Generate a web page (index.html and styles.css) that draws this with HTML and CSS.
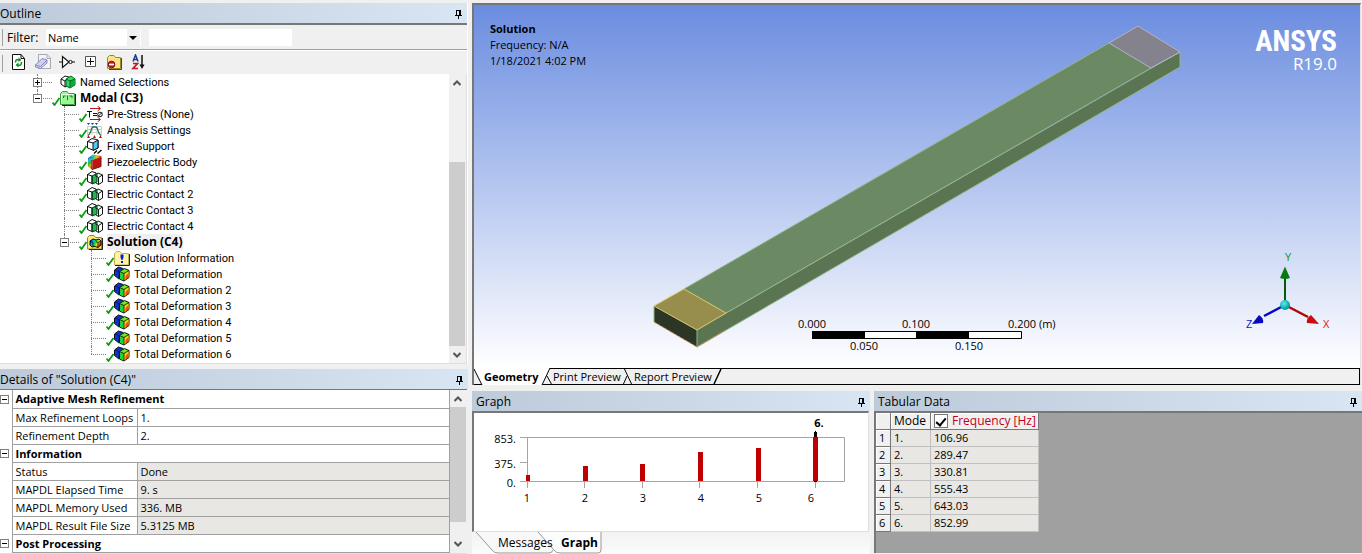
FILE: index.html
```html
<!DOCTYPE html>
<html lang="en">
<head>
<meta charset="utf-8">
<title>Modal Analysis</title>
<link rel="stylesheet" href="styles.css">
</head>
<body>
<svg class="defs" aria-hidden="true">
  <defs>
    <linearGradient id="rainbow" x1="0" y1="0" x2="1" y2="0.4">
      <stop offset="0.1" stop-color="#0a20d8"/><stop offset="0.35" stop-color="#00b4e8"/><stop offset="0.55" stop-color="#18d428"/><stop offset="0.8" stop-color="#f0e010"/><stop offset="1" stop-color="#e02008"/>
    </linearGradient>
    <linearGradient id="piezo" x1="0" y1="0" x2="0.3" y2="1">
      <stop offset="0" stop-color="#1238e0"/><stop offset="0.25" stop-color="#18c8d0"/><stop offset="0.5" stop-color="#30b830"/><stop offset="0.8" stop-color="#d8b010"/><stop offset="1" stop-color="#e06010"/>
    </linearGradient>
    <linearGradient id="piezo-top" x1="0" y1="0" x2="1" y2="0">
      <stop offset="0" stop-color="#1850e0"/><stop offset="0.35" stop-color="#20c0a0"/><stop offset="0.65" stop-color="#d8c820"/><stop offset="1" stop-color="#d83010"/>
    </linearGradient>
  </defs>
  <symbol id="pin" viewBox="0 0 7 9"><path d="M1 0h5v5h1v1H4v3H3V6H0V5h1zM2 1v4h2V1z" fill="#000" fill-rule="evenodd" shape-rendering="crispEdges"/></symbol>
  <symbol id="up" viewBox="0 0 8 6"><path d="M.5 5L4 1.5 7.500 5" fill="none" stroke="#555" stroke-width="2"/></symbol>
  <symbol id="down" viewBox="0 0 8 6"><path d="M.5 1L4 4.500 7.500 1" fill="none" stroke="#555" stroke-width="2"/></symbol>
  <symbol id="check" viewBox="0 0 8 9"><path d="M.5 5.500L2.500 8 7.500 1" fill="none" stroke="#0a9a14" stroke-width="1.800"/></symbol>
  <symbol id="named" viewBox="0 0 16 16"><path d="M1 5l4-3 4 1v8l-4 2-4-3z" fill="#fff" stroke="#111"/><path d="M1 5l4 2v6M5 7l4-3" fill="none" stroke="#111"/><path d="M6 5l5-3 4 3v6l-5 3-4-2z" fill="#35dc50" stroke="#063"/><path d="M10 7l5-2v6l-5 3z" fill="#12a838"/><path d="M6 5l4 2v7M10 7l5-2" fill="none" stroke="#063"/></symbol>
  <symbol id="modal" viewBox="0 0 16 16"><path d="M.5 14.500V3.500L2.500 1.500H7L8.500 3.500H14.500V14.500z" fill="#9af596" stroke="#3c9a3c"/><path d="M1.500 13V4.500h12" fill="none" stroke="#dcffd8"/><path d="M3.500 8V6h2M7.500 10V5.500M9.500 6h2.500v2" fill="none" stroke="#2a702a"/><path d="M15.500 4v11.500H2" fill="none" stroke="#222"/></symbol>
  <symbol id="stress" viewBox="0 0 16 16"><path d="M3 2.500h10M3 13.500h10M10.500 0L13.500 2.500 10.500 5M10.500 11L13.500 13.500 10.500 16" fill="none" stroke="#b01818"/><path d="M0 5.500h5M2.500 5.500v6M6 7.500h4M6 9.500h4M11 10.500l4-4" fill="none" stroke="#111"/><circle cx="13" cy="8.500" r="2.300" fill="none" stroke="#111"/></symbol>
  <symbol id="settings" viewBox="0 0 16 16"><path d="M.5 14V4.500h14V14M.5 7.500h14M.5 10.500h14M5 4v9M10 4v9" fill="none" stroke="#ccc"/><path d="M1 13c3 0 3-8 5-8h3c2 0 2 8 5 8" fill="none" stroke="#187040" stroke-width="1.300"/><path d="M0 1h3L1.500 3zM4 1h3L5.500 3zM8 1h3L9.500 3z" fill="#1030c8"/><path d="M0 16l1.500-3L3 16zM6 16l1.500-3L9 16zM12 16l1.500-3L15 16z" fill="#c01010"/></symbol>
  <symbol id="support" viewBox="0 0 16 16"><path d="M.5 3.500L5 .5l6 1.500v8L6 12 .5 10z" fill="#fff" stroke="#111"/><path d="M6 5l5-3v8l-5 2.500z" fill="#50c8f8" stroke="#111"/><path d="M.5 3.500L6 5" stroke="#111"/><path d="M7 15.500l3-3M10.500 15.500l4-3.500" stroke="#111" stroke-width="1.500"/></symbol>
  <symbol id="body" viewBox="0 0 16 16"><path d="M1 4l4 2v9.500L1 12.500z" fill="url(#piezo)"/><path d="M1 4l5-3.500 8.500 1.500V5L5 6z" fill="url(#piezo-top)"/><path d="M5.500 6l8.500-3v9.500l-8.500 3z" fill="#c01414"/><path d="M5 6v9.500l9-3V4" fill="none" stroke="#7c1408"/></symbol>
  <symbol id="contact" viewBox="0 0 16 16"><g fill="#fff" stroke="#111"><path d="M.5 4.500L5 1.500l4 1.500v8L5 13.500l-4.500-2z"/><path d="M7.500 5.500l3.500-2.500 4.500 2v7l-4 2.500-4-2.500z"/></g><path d="M5 6l5-2.500v8.500l-5 2z" fill="#20b850" stroke="#053818"/><path d="M.5 4.500L5 6v7M11.500 7.500l4-2.500M11.500 7.500v7M8 5.500l3.500 2" fill="none" stroke="#111"/></symbol>
  <symbol id="solution" viewBox="0 0 16 16"><path d="M.5 15V3.500L2.500 1.500H7L8.500 3.500H14.500V15z" fill="#f8e878" stroke="#a08818"/><path d="M3 7l3-2 3 1 3-1 2 2v4l-3 2.500-3-1-3 .5-2-2z" fill="url(#rainbow)" stroke="#111"/><path d="M3 7l3 1.500V13M9 7.500l2 1v5M11 8.500l3-1.500" fill="none" stroke="#111" stroke-width=".8"/><path d="M15.500 4v11.500H2" fill="none" stroke="#222"/></symbol>
  <symbol id="info" viewBox="0 0 16 16"><path d="M.5 15V3.500L2.500 1.500H6L7.500 3.500H14.500V15z" fill="#fdf3a8" stroke="#c8b050"/><path d="M15.500 4v11.500H1" fill="none" stroke="#222"/><path d="M6.500 4.500h3v3l-1 2.500h-1l-1-2.500zM7 11h2v2H7z" fill="#1018e8"/></symbol>
  <symbol id="deform" viewBox="0 0 16 16"><path d="M.5 4l4-3L9 2.500v7L5 13 .5 9.500z" fill="#1030d8" stroke="#111"/><path d="M5 5.500L8.500 3v8L5 12.500z" fill="#10a8f0"/><path d="M1 4l4 1.500V12" fill="none" stroke="#0a1870"/><path d="M5.500 5.500l5-3 4.500 2v7l-5 3.500-4.500-2z" fill="#70e820" stroke="#111"/><path d="M6 6l4 1.500V14.500L6 12.500z" fill="#18d838"/><path d="M10 7.500l4.500-2.500v6L10 14.500z" fill="#f8d010"/><path d="M12 9.500l2.500-2.500v4.500L11 13.800z" fill="#f84810"/><path d="M5.500 5.500l4.500 2 5-3M10 7.500v7.500" fill="none" stroke="#111" stroke-width=".8"/></symbol>
</svg>

<main class="workspace">
  <div class="side">
    <section class="panel outline">
      <header class="titlebar"><h2>Outline</h2><button class="pin" aria-label="Auto hide outline"><svg><use href="#pin"/></svg></button></header>
      <form class="filter">
        <label for="filter-by">Filter:</label>
        <span class="combo"><select id="filter-by"><option>Name</option></select></span>
        <input type="text" class="filter-text" aria-label="Filter text">
      </form>
      <div class="toolbar">
        <button aria-label="Refresh"><svg viewBox="0 0 16 16"><path d="M1.500.5H10l3.500 4V15.500H1.500z" fill="#fff" stroke="#111"/><path d="M10 .5v4h3.500" fill="none" stroke="#111"/><path d="M4.500 8.500C4.500 6 6 5 8 6M10.500 8c0 3-1.500 4-3.500 3" fill="none" stroke="#10902a" stroke-width="1.600"/><path d="M7.500 3.500l3 2.500-3 2zM7.500 8.500L4.500 11l3 2.500z" fill="#10902a"/></svg></button>
        <button aria-label="Clear data"><svg viewBox="0 0 16 16"><path d="M3.500.5H12l3.500 3.500V14.500H3.500z" fill="#f4f4f8" stroke="#a8a8b4"/><path d="M12 .5v4h3.500" fill="none" stroke="#a8a8b4"/><path d="M.5 11L7 4.500l5 1.500v3L5.500 14.500.5 13z" fill="#d0d0f0" stroke="#8888b8"/><path d="M.5 11l5 1.500L12 6" fill="none" stroke="#8888b8"/></svg></button>
        <button aria-label="Graphics"><svg viewBox="0 0 16 16"><path d="M0 8h3M3.500 2.500v11L10 8zM13 8h3" fill="#fff" stroke="#111" stroke-width="1.200"/><circle cx="11.500" cy="8" r="1.600" fill="#fff" stroke="#111"/></svg></button>
        <button aria-label="Expand all"><svg viewBox="0 0 16 16"><path d="M2.500 2.500h10v10h-10z" fill="#fff" stroke="#555"/><path d="M4 7.500h7M7.500 4v7" stroke="#111"/></svg></button>
        <button aria-label="Hide folders"><svg viewBox="0 0 16 16"><path d="M.5 14.500V3.500L2.500 1.500H7L8.500 3.500H13.500V14.500z" fill="#f8e488" stroke="#a08820"/><path d="M14.500 4v11.500H2" fill="none" stroke="#444"/><circle cx="4.500" cy="10.500" r="3.300" fill="#d81830" stroke="#700818"/><path d="M2 10.500h5" stroke="#fff" stroke-width="1.600"/></svg></button>
        <button aria-label="Sort ascending"><svg viewBox="0 0 16 16"><path d="M2 7.500L4.500 1 7 7.500M3 5.500h3" fill="none" stroke="#203890" stroke-width="1.500"/><path d="M2 9.500h4.500L2 14.500h5" fill="none" stroke="#c01828" stroke-width="1.700"/><path d="M11 1v11" stroke="#111" stroke-width="1.500"/><path d="M8.500 10.500h5L11 15z" fill="#111"/></svg></button>
      </div>
      <div class="scroller">
        <ul class="tree">
          <li><div class="row"><i></i><button class="exp plus" aria-label="Expand"></button><span class="check"></span><svg class="icon"><use href="#named"/></svg><span class="label">Named Selections</span></div></li>
          <li><div class="row"><i></i><button class="exp" aria-label="Collapse"></button><svg class="check"><use href="#check"/></svg><svg class="icon"><use href="#modal"/></svg><b class="label">Modal (C3)</b></div>
            <ul>
              <li><div class="row"><i></i><svg class="check"><use href="#check"/></svg><svg class="icon"><use href="#stress"/></svg><span class="label">Pre-Stress (None)</span></div></li>
              <li><div class="row"><i></i><svg class="check"><use href="#check"/></svg><svg class="icon"><use href="#settings"/></svg><span class="label">Analysis Settings</span></div></li>
              <li><div class="row"><i></i><svg class="check"><use href="#check"/></svg><svg class="icon"><use href="#support"/></svg><span class="label">Fixed Support</span></div></li>
              <li><div class="row"><i></i><svg class="check"><use href="#check"/></svg><svg class="icon"><use href="#body"/></svg><span class="label">Piezoelectric Body</span></div></li>
              <li><div class="row"><i></i><svg class="check"><use href="#check"/></svg><svg class="icon"><use href="#contact"/></svg><span class="label">Electric Contact</span></div></li>
              <li><div class="row"><i></i><svg class="check"><use href="#check"/></svg><svg class="icon"><use href="#contact"/></svg><span class="label">Electric Contact 2</span></div></li>
              <li><div class="row"><i></i><svg class="check"><use href="#check"/></svg><svg class="icon"><use href="#contact"/></svg><span class="label">Electric Contact 3</span></div></li>
              <li><div class="row"><i></i><svg class="check"><use href="#check"/></svg><svg class="icon"><use href="#contact"/></svg><span class="label">Electric Contact 4</span></div></li>
              <li><div class="row"><i></i><button class="exp" aria-label="Collapse"></button><svg class="check"><use href="#check"/></svg><svg class="icon"><use href="#solution"/></svg><b class="label selected">Solution (C4)</b></div>
                <ul>
                  <li><div class="row"><i></i><svg class="check"><use href="#check"/></svg><svg class="icon"><use href="#info"/></svg><span class="label">Solution Information</span></div></li>
                  <li><div class="row"><i></i><svg class="check"><use href="#check"/></svg><svg class="icon"><use href="#deform"/></svg><span class="label">Total Deformation</span></div></li>
                  <li><div class="row"><i></i><svg class="check"><use href="#check"/></svg><svg class="icon"><use href="#deform"/></svg><span class="label">Total Deformation 2</span></div></li>
                  <li><div class="row"><i></i><svg class="check"><use href="#check"/></svg><svg class="icon"><use href="#deform"/></svg><span class="label">Total Deformation 3</span></div></li>
                  <li><div class="row"><i></i><svg class="check"><use href="#check"/></svg><svg class="icon"><use href="#deform"/></svg><span class="label">Total Deformation 4</span></div></li>
                  <li><div class="row"><i></i><svg class="check"><use href="#check"/></svg><svg class="icon"><use href="#deform"/></svg><span class="label">Total Deformation 5</span></div></li>
                  <li><div class="row"><i></i><svg class="check"><use href="#check"/></svg><svg class="icon"><use href="#deform"/></svg><span class="label">Total Deformation 6</span></div></li>
                </ul>
              </li>
            </ul>
          </li>
        </ul>
        <div class="scrollbar tree-bar"><button aria-label="Scroll up"><svg><use href="#up"/></svg></button><span class="before"></span><span class="thumb"></span><span class="after"></span><button aria-label="Scroll down"><svg><use href="#down"/></svg></button></div>
      </div>
    </section>

    <section class="panel details">
      <header class="titlebar"><h2>Details of "Solution (C4)"</h2><button class="pin" aria-label="Auto hide details"><svg><use href="#pin"/></svg></button></header>
      <div class="scroller">
        <table class="props">
          <tbody>
            <tr><td class="gutter"><button class="exp" aria-label="Collapse"></button></td><th colspan="2">Adaptive Mesh Refinement</th></tr>
            <tr><td class="gutter"></td><td class="key">Max Refinement Loops</td><td>1.</td></tr>
            <tr><td class="gutter"></td><td class="key">Refinement Depth</td><td>2.</td></tr>
            <tr><td class="gutter"><button class="exp" aria-label="Collapse"></button></td><th colspan="2">Information</th></tr>
            <tr><td class="gutter"></td><td class="key">Status</td><td class="fixed">Done</td></tr>
            <tr><td class="gutter"></td><td class="key">MAPDL Elapsed Time</td><td class="fixed">9. s</td></tr>
            <tr><td class="gutter"></td><td class="key">MAPDL Memory Used</td><td class="fixed">336. MB</td></tr>
            <tr><td class="gutter"></td><td class="key">MAPDL Result File Size</td><td class="fixed">5.3125 MB</td></tr>
            <tr><td class="gutter"><button class="exp" aria-label="Collapse"></button></td><th colspan="2">Post Processing</th></tr>
          </tbody>
        </table>
        <div class="scrollbar props-bar"><button aria-label="Scroll up"><svg><use href="#up"/></svg></button><span class="before"></span><span class="thumb"></span><span class="after"></span><button aria-label="Scroll down"><svg><use href="#down"/></svg></button></div>
      </div>
    </section>
  </div>

  <div class="stage">
    <section class="view">
      <div class="scene">
        <svg class="model" viewBox="0 0 886 363" role="img" aria-label="Beam with two end patches">
          <path d="M210 284L635 38 677 63 252 308z" fill="#6b8a63"/>
          <path d="M223 325L706 47V62L223 342z" fill="#5b7553"/>
          <path d="M180 301L223 325V342L180 317z" fill="#2b3626"/>
          <path d="M180 301L210 284 252 308 223 325z" fill="#978d4c"/>
          <path d="M635 38L664 21 706 47 677 63z" fill="#83828d"/>
          <path d="M210 284L635 38M252 308L677 63M677 63L706 47V62L223 342V325M180 301V317" fill="none" stroke="#8fb588"/>
          <path d="M180 301L210 284 252 308 223 325z" fill="none" stroke="#d6c566"/>
          <path d="M635 38L664 21 706 47 677 63z" fill="none" stroke="#b4b2c4"/>
          <path d="M180 317L223 342 252 325" fill="none" stroke="#cf945e" stroke-dasharray="3 1"/>
        </svg>
        <div class="note"><b>Solution</b><span>Frequency: N/A</span><span>1/18/2021 4:02 PM</span></div>
        <div class="brand"><b>ANSYS</b><span>R19.0</span></div>
        <svg class="scale" viewBox="0 0 280 36">
          <path d="M35.500 15.500h209v7h-209z" fill="#fff" stroke="#000"/><path d="M35 15h53v8H35zM139 15h53v8h-53z"/>
          <g text-anchor="middle"><text x="35" y="12">0.000</text><text x="139" y="12">0.100</text><text x="87" y="34">0.050</text><text x="192" y="34">0.150</text></g><text x="231" y="12">0.200 (m)</text>
        </svg>
        <svg class="triad" viewBox="0 0 90 85">
          <defs><radialGradient id="ball" cx=".4" cy=".35" r=".6"><stop offset="0" stop-color="#50f0f0"/><stop offset="1" stop-color="#089898"/></radialGradient></defs>
          <path d="M41 57V28" stroke="#065a0a" stroke-width="2"/><path d="M41 57L20 68" stroke="#0808c8" stroke-width="2.500"/><path d="M41 57L64 69" stroke="#b00808" stroke-width="2.500"/>
          <path d="M41 18.500L46 30Q41 32 36 30z" fill="#087810"/><path d="M8 76L15 67Q20 70 19 75z" fill="#0808c0"/><path d="M75 76L67 67Q62 70 63 75z" fill="#cc0c0c"/>
          <circle cx="41" cy="57" r="5" fill="url(#ball)"/>
          <text x="41" y="13" fill="#109818">Y</text><text x="79" y="80" fill="#e01818">X</text><text x="2" y="80" fill="#1818d0">Z</text>
        </svg>
      </div>
      <nav class="view-tabs">
        <svg viewBox="0 0 250 17" aria-hidden="true"><path d="M0 0H76L68 17H8z" fill="#fff"/><path d="M76 .5H250M0 1L8 17M76 0L68 17M73 8l5 9M149 17l4-9M150 0l8 17" fill="none" stroke="#000"/><path d="M247 1L240 16" stroke="#000" stroke-width="1.500"/></svg>
        <button class="current">Geometry</button><button>Print Preview</button><button>Report Preview</button>
      </nav>
    </section>

    <div class="data">
      <section class="panel graph">
        <header class="titlebar"><h2>Graph</h2><button class="pin" aria-label="Auto hide graph"><svg><use href="#pin"/></svg></button></header>
        <div class="chart">
          <svg viewBox="0 0 394 118" role="img" aria-label="Frequency by mode">
            <path d="M46 24.500H370.500V68.500H46M53.500 24V75M46 49.500h7M110.500 68v7M168.500 68v7M225.500 68v7M283.500 68v7M341.500 68v7" fill="none" stroke="#a5a5a5"/>
            <path d="M52 62h4v6h-4zM109 53h5v15h-5zM166 51h5v17h-5zM224 39h5v29h-5zM282 35h5v33h-5zM339 24h5v44h-5z" fill="#c00000"/>
            <path d="M340 24v-5h1v-1h1v1h1v5zM340 68h3v1h-3z"/>
            <g text-anchor="end"><text x="42" y="30">853.</text><text x="42" y="55">375.</text><text x="42" y="74">0.</text></g>
            <g text-anchor="middle"><text x="53" y="89">1</text><text x="111" y="89">2</text><text x="169" y="89">3</text><text x="227" y="89">4</text><text x="285" y="89">5</text><text x="337" y="89">6</text><text x="345" y="14" font-weight="bold">6.</text></g>
          </svg>
        </div>
        <nav class="graph-tabs">
          <svg viewBox="0 0 130 22" aria-hidden="true"><path d="M4 0L20 18Q22 21 26 21H77Q80 21 81 18L67 0z" fill="#f8f8f8"/><path d="M4 0L20 18Q22 21 26 21H77Q80 21 81 18" fill="none" stroke="#999"/><path d="M66 0L82 18Q84 21 88 21H126Q129 21 129 18V0" fill="#fcfcfc" stroke="#999"/></svg>
          <button>Messages</button><button class="current">Graph</button>
        </nav>
      </section>
      <section class="panel tabular">
        <header class="titlebar"><h2>Tabular Data</h2><button class="pin" aria-label="Auto hide tabular data"><svg><use href="#pin"/></svg></button></header>
        <div class="sheet">
          <table>
            <thead><tr><th></th><th>Mode</th><th class="freq"><label><input type="checkbox" checked>Frequency [Hz]</label></th></tr></thead>
            <tbody>
              <tr><th>1</th><td>1.</td><td>106.96</td></tr>
              <tr><th>2</th><td>2.</td><td>289.47</td></tr>
              <tr><th>3</th><td>3.</td><td>330.81</td></tr>
              <tr><th>4</th><td>4.</td><td>555.43</td></tr>
              <tr><th>5</th><td>5.</td><td>643.03</td></tr>
              <tr><th>6</th><td>6.</td><td>852.99</td></tr>
            </tbody>
          </table>
        </div>
      </section>
    </div>
  </div>
</main>
</body>
</html>
```
FILE: styles.css
```css
* { box-sizing: border-box; }
body {
  margin: 0;
  background: #f0f0f0;
  color: #000;
  font: 12px/16px "Open Sans", "Noto Sans", sans-serif;
}
button { margin: 0; padding: 0; border: 0; background: none; color: inherit; font: inherit; }
svg { display: block; }
ul { list-style: none; margin: 0; padding: 0; }
.defs { position: absolute; width: 0; height: 0; }

.workspace {
  display: grid;
  grid-template-columns: 468px minmax(0, 1fr);
  column-gap: 4px;
  min-height: 100vh;
  padding-top: 3px;
}
.side { display: flex; flex-direction: column; gap: 5px; }
.stage { display: flex; flex-direction: column; gap: 6px; }

.titlebar {
  display: flex;
  align-items: center;
  justify-content: space-between;
  height: 20px;
  padding-top: 2px;
  padding-right: 5px;
  background: linear-gradient(90deg, #bccad9, #d8e5f3);
}
.titlebar h2 { margin: 0; font-size: 12px; font-weight: 400; }
.stage .titlebar { padding-left: 4px; }
.pin svg { width: 7px; height: 9px; }

/* Outline */
.outline { border-right: 1px solid #fff; }
.filter {
  display: flex;
  align-items: center;
  height: 27px;
  padding: 1px 0 0 7px;
  border: solid #777;
  border-width: 2px 0 1px;
  border-bottom-color: #a0a0a0;
}
.filter, .toolbar {
  background: linear-gradient(#a0a0a0, #a0a0a0) 2px 4px / 1px 17px no-repeat;
}
.filter label { width: 39px; }
.combo { position: relative; width: 95px; background: #fff; }
.combo::before, .combo::after { content: ""; position: absolute; pointer-events: none; }
.combo::before { top: 0; right: 1px; width: 13px; height: 17px; background: #f0f0f0; }
.combo::after {
  top: 7px;
  right: 4px;
  border: 4px solid transparent;
  border-top-color: #000;
  border-bottom: 0;
}
.combo select, .filter-text {
  display: block;
  width: 100%;
  height: 17px;
  padding: 0 2px;
  border: 0;
  border-radius: 0;
  background: #fff;
  font: 11px/16px "Open Sans", "Noto Sans", sans-serif;
  appearance: none;
}
.filter-text { width: 143px; margin-left: 8px; }
.toolbar {
  display: flex;
  align-items: center;
  gap: 8px;
  height: 24px;
  padding: 0 0 1px 11px;
  border-top: 1px solid #fff;
}
.toolbar svg { width: 16px; height: 16px; }
.scroller { display: flex; }
.outline .scroller { border-right: 1px solid #dfdfdf; border-bottom: 1px solid #dfdfdf; }

.tree {
  flex: 1;
  padding: 0 0 1px 37px;
  background: #fff;
  font-family: Roboto, "Open Sans", sans-serif;
  font-size: 11px;
}
.tree ul { margin-left: 27px; }
.tree li { position: relative; }
.tree li::before {
  content: "";
  position: absolute;
  top: 0;
  bottom: 0;
  left: 0;
  border-left: 1px dotted #808080;
}
.tree li:last-child::before { bottom: auto; height: 8px; }
.row { position: relative; display: flex; align-items: center; height: 16px; }
.row i { width: 15px; border-top: 1px dotted #808080; }
.check { width: 8px; height: 9px; margin-top: 7px; }
.icon { width: 16px; height: 16px; }
.label { margin-left: 4px; padding-top: 2px; line-height: 14px; white-space: nowrap; }
b.label { padding-top: 0; line-height: 16px; font-family: "Open Sans", "Noto Sans", sans-serif; font-size: 12px; }
.selected { background: #f0f0f0; }
.exp {
  width: 9px;
  height: 9px;
  border: 1px solid #808080;
  background: linear-gradient(#000, #000) center / 5px 1px no-repeat #fff;
}
.row .exp { position: absolute; left: -4px; top: 4px; }
.exp.plus {
  background:
    linear-gradient(#000, #000) center / 5px 1px no-repeat,
    linear-gradient(#000, #000) center / 1px 5px no-repeat #fff;
}

.scrollbar { display: flex; flex-direction: column; width: 17px; padding-right: 1px; background: #f0f0f0; }
.scrollbar button { display: grid; place-items: center; height: 17px; }
.scrollbar svg { width: 8px; height: 6px; }
.thumb { background: #cdcdcd; }
.tree-bar .before { flex: 71; }
.tree-bar .thumb { flex: 184; }
.props-bar .thumb { flex: 115; }
.props-bar .after { flex: 14; }

/* Details */
.details .scroller { border-top: 1px solid #777; border-bottom: 1px solid #dfdfdf; margin-right: 1px; }
.props { flex: 1; border-collapse: collapse; background: #fff; table-layout: fixed; }
.props tr { height: 18px; }
.props td, .props th {
  padding: 0 0 0 3px;
  border: 1px solid #a0a0a0;
  border-top: 0;
  font-size: 11px;
  line-height: 17px;
  text-align: left;
}
.props th { font-weight: 700; }
.props td.gutter { width: 12px; padding: 0; border-bottom: 0; border-left: 0; }
.gutter .exp { display: block; }
.props td.key { width: 125px; }
.props td.fixed { background: #e8e7e3; }

/* Graphics view */
.view {
  margin-right: 1px;
  border: solid #a0a0a0;
  border-width: 2px 1px 0 2px;
  border-color: #777 #e3e3e3 #777 #777;
  display: flex;
  flex: 1;
  flex-direction: column;
}
.scene { position: relative; flex: 1; background: linear-gradient(#6b8de0, #fff); }
.model { width: 100%; height: 100%; }
.note { position: absolute; top: 16px; left: 16px; display: flex; flex-direction: column; font-size: 11px; }
.brand { position: absolute; top: 20px; right: 23px; display: flex; flex-direction: column; align-items: flex-end; color: #fff; }
.brand b { font: 700 29px/32px "Roboto Condensed", "Open Sans", sans-serif; }
.brand span { font-size: 17px; line-height: 14px; }
.scale, .triad { position: absolute; font-size: 11px; }
.scale { left: 50%; bottom: 16px; width: 280px; height: 36px; margin-left: -140px; }
.triad { right: 26px; bottom: 35px; width: 90px; height: 85px; }

.view-tabs {
  position: relative;
  display: flex;
  height: 17px;
  padding-left: 10px;
  background: linear-gradient(#000, #000) 76px 0 / 100% 1px no-repeat #f0f0f0;
  border-right: 1px solid #000;
  border-bottom: 1px solid #000;
}
.view-tabs svg { position: absolute; left: 0; top: 0; width: 250px; height: 17px; }
.view-tabs button { position: relative; padding: 1px 10px 0 0; text-align: left; white-space: nowrap; font-size: 11px; }
.view-tabs button:nth-of-type(1) { width: 69px; }
.view-tabs button:nth-of-type(2) { width: 81px; }
.current { font-weight: 700; }

/* Graph and tabular data */
.data { display: grid; grid-template-columns: minmax(0, 398fr) minmax(0, 488fr); column-gap: 4px; }
.graph { display: flex; flex-direction: column; }
.chart { margin-right: 1px; border: solid #777; border-width: 2px 1px 1px 2px; border-right-color: #dfdfdf; border-bottom-color: #dfdfdf; background: #fff; }
.chart svg { width: 100%; height: auto; font-size: 11px; }
.graph-tabs { position: relative; display: flex; height: 22px; padding-left: 26px; background: linear-gradient(#f2f2f2, #fcfcfc); }
.graph-tabs svg { position: absolute; left: 0; top: 0; width: 130px; height: 22px; }
.graph-tabs button { position: relative; width: 63px; text-align: left; }
.tabular { display: flex; flex-direction: column; }
.sheet { flex: 1; margin-bottom: 1px; border: solid #777; border-width: 2px 0 0 2px; background: #a0a0a0; }
.sheet table { width: 163px; table-layout: fixed; border-collapse: separate; border-spacing: 0; }
.sheet tr { height: 17px; }
.sheet th, .sheet td { padding: 0 0 0 3px; text-align: left; line-height: 16px; font-weight: 400; }
.sheet th { background: #f0f0f0; border: solid #777; border-width: 0 1px 1px 0; box-shadow: inset 1px 1px #fff; }
.sheet td { background: #e8e7e3; border: solid #c0c0c0; border-width: 0 1px 1px 0; font-size: 11px; }
.sheet th:first-child { width: 15px; font-size: 11px; }
.sheet th:nth-child(2) { width: 40px; }
.freq label { display: flex; align-items: center; gap: 4px; color: #c00020; white-space: nowrap; }
.freq input {
  width: 14px;
  height: 14px;
  margin: 0;
  appearance: none;
  background: #fff;
  border: 1px solid #777;
  display: grid;
  place-items: center;
}
.freq input:checked::before {
  content: "";
  width: 4px;
  height: 8px;
  border: solid #000;
  border-width: 0 2px 2px 0;
  transform: rotate(40deg);
}
```
